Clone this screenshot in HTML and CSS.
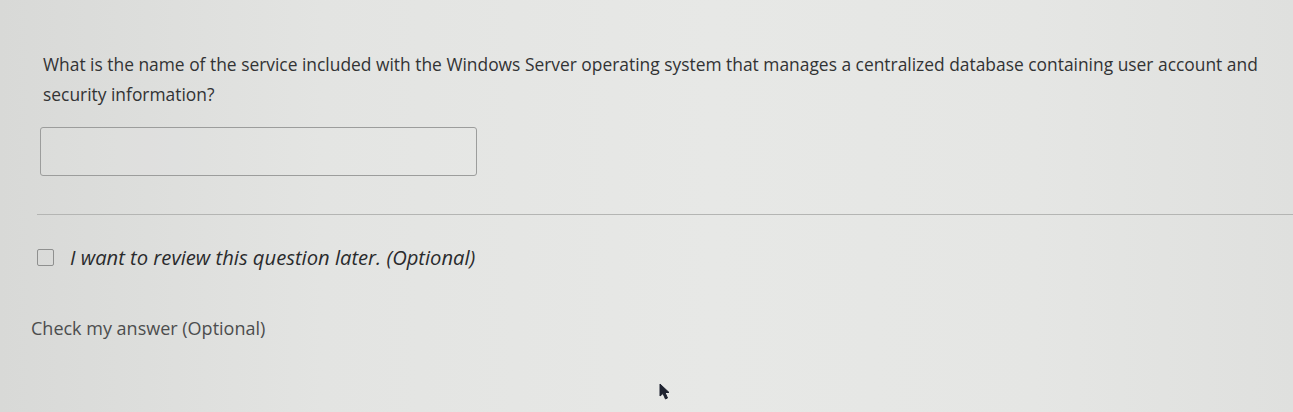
FILE: index.html
```html
<!DOCTYPE html>
<html>
<head>
<meta charset="utf-8">
<link rel="stylesheet" href="styles.css">
</head>
<body>
<div class="page">
  <div class="question">
    <p class="qtext">What is the name of the service included with the Windows Server operating system that manages a centralized database containing user account and security information?</p>
    <div class="answer"></div>
  </div>
  <hr class="divider">
  <label class="review">
    <span class="box"></span>
    <span class="review-text">I want to review this question later. (Optional)</span>
  </label>
  <div class="check">Check my answer (Optional)</div>
  <svg class="cursor" width="14" height="20" viewBox="0 0 14 20">
    <path d="M1 1 L1 13 L4 10.5 L6.5 16 L8.5 15 L6 9.5 L10 9.5 Z" fill="#1f2330" stroke="#1f2330" stroke-width="1"/>
  </svg>
</div>
</body>
</html>
```
FILE: styles.css
```css
html, body {
  margin: 0;
  padding: 0;
}
body {
  width: 1293px;
  height: 412px;
  overflow: hidden;
  background: linear-gradient(90deg, #d8d9d7 0%, #e3e4e2 25%, #e7e8e6 55%, #e5e6e4 80%, #dfe0de 100%);
  font-family: "Open Sans", "Noto Sans", sans-serif;
  color: #323334;
}
.page {
  position: relative;
  height: 412px;
  padding-top: 49px;
  box-sizing: border-box;
}
.question {
  padding-left: 43px;
  padding-right: 20px;
}
.qtext {
  margin: 0;
  font-size: 17.4px;
  font-weight: 500;
  line-height: 30px;
}
.answer {
  margin-top: 18px;
  margin-left: -3px;
  width: 435px;
  height: 47px;
  border: 1px solid #9c9d9c;
  border-radius: 3px;
  background: rgba(255,255,255,0.06);
}
.divider {
  margin: 38px 0 0 37px;
  border: 0;
  border-top: 1px solid #b4b5b3;
  height: 0;
}
.review {
  display: flex;
  align-items: center;
  gap: 16px;
  margin: 31px 0 0 37px;
  height: 22px;
}
.box {
  width: 15px;
  height: 15px;
  border: 1px solid #8f908f;
  border-radius: 2px;
  flex: none;
}
.review-text {
  font-style: italic;
  font-size: 20.2px;
  font-weight: 500;
  color: #2a2b2d;
}
.check {
  margin: 48px 0 0 31px;
  font-size: 18px;
  color: #4c4d4e;
}
.cursor {
  position: absolute;
  left: 659px;
  top: 383px;
}
```
